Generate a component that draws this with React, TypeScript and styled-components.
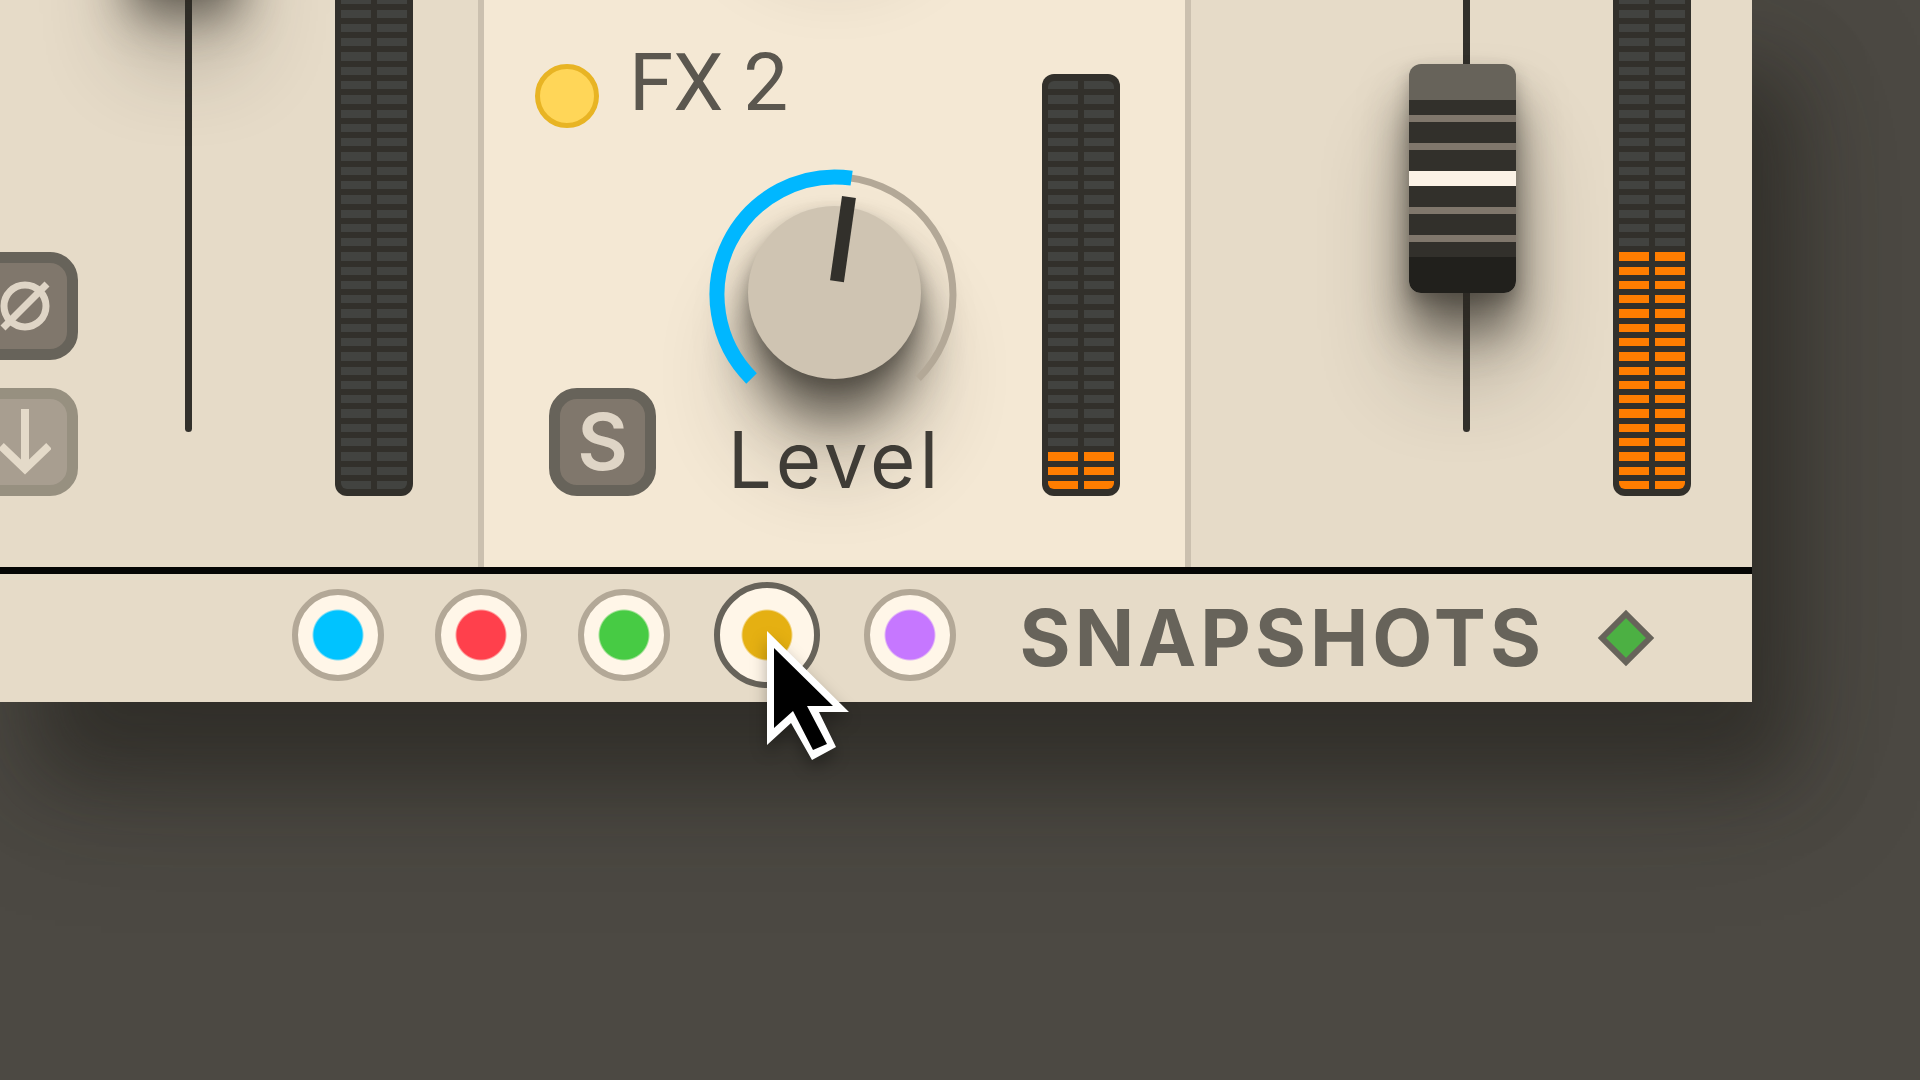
import React, { useState } from "react";
import styled, { createGlobalStyle, css } from "styled-components";

const color = {
  desk: "#4c4943",
  panel: "#e6dbc8",
  panelLight: "#f4e8d4",
  seam: "#cbc0af",
  rule: "#050504",
  ink: "#3f3c36",
  inkSoft: "#5b574f",
  iron: "#67635a",
  stone: "#80776c",
  sand: "#dfd5c6",
  ring: "#b3a897",
  cream: "#fff6e8",
  coal: "#32302b",
  cell: "#424340",
  lit: "#ff7d00",
  arc: "#00b7ff",
};

const GlobalStyle = createGlobalStyle`
  *, *::before, *::after { box-sizing: border-box; }
  body {
    margin: 0;
    min-height: 100vh;
    background: ${color.desk};
    font-family: Inter, "Liberation Sans", sans-serif;
    overflow-x: hidden;
  }
`;

const Desk = styled.main`
  min-height: 100vh;
  padding-right: 168px;
  overflow: hidden;
`;

const Mixer = styled.section`
  background: ${color.panel};
  box-shadow:
    40px 76px 72px rgba(34, 32, 28, 0.48),
    32px 72px 140px rgba(34, 32, 28, 0.3);
`;

const Console = styled.div`
  display: grid;
  grid-template-columns: minmax(0, 1fr) 707px 561px;
  grid-template-rows: 567px;
  overflow: hidden;
`;

const Channel = styled.section<{ $light?: boolean; $seam?: boolean }>`
  position: relative;
  display: flex;
  align-items: flex-end;
  justify-content: flex-end;
  min-width: 0;
  min-height: 0;
  padding: 0 ${(p) => (p.$seam ? 65 : 61)}px 71px 51px;
  background: ${(p) => (p.$light ? color.panelLight : color.panel)};
  border-right: ${(p) => (p.$seam ? `6px solid ${color.seam}` : "0")};
`;

const Meter = styled.div<{ $tall?: boolean }>`
  display: grid;
  grid-template-columns: 1fr 1fr;
  gap: 6px;
  flex: none;
  width: 78px;
  height: ${(p) => (p.$tall ? 522 : 422)}px;
  padding: 7px 6px;
  border-radius: 12px;
  background: ${color.coal};
`;

const MeterLane = styled.div`
  display: flex;
  flex-direction: column;
  gap: 6px;
  overflow: hidden;
  &:first-child { border-radius: 6px 0 0 6px; }
  &:last-child { border-radius: 0 6px 6px 0; }
`;

const MeterCell = styled.span<{ $lit: boolean }>`
  flex: 1;
  background: ${(p) => (p.$lit ? color.lit : color.cell)};
`;

const softShadow = css`
  box-shadow:
    0 8px 16px rgba(45, 42, 36, 0.3),
    0 36px 48px rgba(45, 42, 36, 0.65),
    0 80px 88px rgba(45, 42, 36, 0.3);
`;

const FaderSlot = styled.label`
  position: relative;
  display: flex;
  justify-content: center;
  align-items: flex-end;
  flex: none;
  width: 107px;
  height: 100%;
  margin-right: 97px;
  padding: 0 0 64px 7px;
`;

const FaderTrack = styled.span`
  width: 7px;
  height: 100%;
  background: ${color.coal};
  border-radius: 0 0 4px 4px;
`;

const FaderCap = styled.span`
  position: absolute;
  left: 0;
  width: 107px;
  height: 229px;
  border-radius: 12px;
  background: linear-gradient(
    ${color.iron} 36px,
    ${color.coal} 36px 51px,
    ${color.stone} 51px 58px,
    ${color.coal} 58px 79px,
    ${color.stone} 79px 86px,
    ${color.coal} 86px 107px,
    #fbf2e6 107px 122px,
    ${color.coal} 122px 143px,
    ${color.stone} 143px 150px,
    ${color.coal} 150px 171px,
    ${color.stone} 171px 178px,
    ${color.coal} 178px 193px,
    #21201c 193px
  );
  ${softShadow}
`;

const hiddenRange = css`
  position: absolute;
  inset: 0;
  width: 100%;
  height: 100%;
  margin: 0;
  opacity: 0;
  cursor: pointer;
`;

const VerticalRange = styled.input`
  ${hiddenRange}
  writing-mode: vertical-lr;
  direction: rtl;
`;

const KnobRange = styled.input`
  ${hiddenRange}
`;

const Buttons = styled.div`
  display: flex;
  flex-direction: column;
  flex: none;
  gap: 28px;
  margin-right: 53px;
`;

const SquareButton = styled.button<{ $dim?: boolean }>`
  display: grid;
  place-items: center;
  flex: none;
  width: 107px;
  height: 108px;
  padding: 0;
  border: 11px solid ${color.iron};
  border-radius: 28px;
  background: ${color.stone};
  color: ${color.sand};
  font: 600 78px/72px Inter, "Liberation Sans", sans-serif;
  ${(p) =>
    p.$dim &&
    css`
      border-color: #979080;
      background: #a89e90;
      color: #e4dac9;
    `}
  svg { display: block; }
`;

const FxStrip = styled.div`
  display: flex;
  flex-direction: column;
  justify-content: space-between;
  flex: 1;
  height: 100%;
  padding-top: 47px;
`;

const KnobAbove = styled.span`
  position: absolute;
  top: -299px;
  left: 264px;
  width: 173px;
  height: 173px;
  border-radius: 50%;
  ${softShadow}
`;

const FxHeader = styled.div`
  display: flex;
  align-items: flex-start;
  gap: 30px;
`;

const Lamp = styled.button`
  width: 64px;
  height: 64px;
  margin: 17px 0 0;
  padding: 0;
  border: 5px solid #e8b424;
  border-radius: 50%;
  background: #ffd658;
`;

const FxName = styled.h2`
  margin: 0;
  color: ${color.inkSoft};
  font-family: Roboto, "Liberation Sans", sans-serif;
  font-size: 80px;
  line-height: 72px;
  font-weight: 400;
`;

const FxBody = styled.div`
  display: flex;
  align-items: flex-end;
  gap: 49px;
  padding-left: 14px;
`;

const KnobField = styled.label`
  display: flex;
  flex-direction: column;
  align-items: center;
  width: 260px;
`;

const KnobDial = styled.span`
  position: relative;
  display: block;
  width: 260px;
  height: 260px;
`;

const KnobFace = styled.span`
  position: absolute;
  top: 42px;
  left: 43px;
  width: 173px;
  height: 173px;
  border-radius: 50%;
  background: #cfc4b2;
  ${softShadow}
`;

const KnobArt = styled.svg`
  position: absolute;
  inset: 0;
`;

const KnobLabel = styled.span`
  position: relative;
  color: ${color.ink};
  font-size: 78px;
  line-height: 72px;
  font-weight: 400;
  letter-spacing: 4px;
`;

const Footer = styled.footer`
  display: flex;
  align-items: center;
  justify-content: flex-end;
  height: 135px;
  padding-right: 97px;
  border-top: 7px solid ${color.rule};
`;

const Snapshots = styled.div`
  display: flex;
  gap: 36px;
  margin-right: 56px;
  padding-bottom: 7px;
`;

const SnapshotSlot = styled.label`
  position: relative;
  display: grid;
  place-items: center;
  width: 107px;
  height: 107px;
`;

const SnapshotRadio = styled.input<{ $tint: string }>`
  appearance: none;
  width: 92px;
  height: 92px;
  margin: 0;
  border: 6px solid ${color.ring};
  border-radius: 50%;
  background: radial-gradient(circle, ${(p) => p.$tint} 24px, ${color.cream} 26px);
  &:checked {
    width: 106px;
    height: 106px;
    border-color: ${color.iron};
  }
`;

const FooterTitle = styled.h2`
  margin: 0;
  color: ${color.iron};
  font-size: 78px;
  line-height: 72px;
  font-weight: 700;
  letter-spacing: 4px;
`;

const Diamond = styled.svg`
  margin-left: 52px;
`;

const Pointer = styled.svg`
  position: absolute;
  top: 50px;
  left: 53px;
  z-index: 1;
  overflow: visible;
  filter: drop-shadow(0 8px 8px rgba(0, 0, 0, 0.3));
  pointer-events: none;
`;

function LevelMeter({ rows, lit, tall, name }: { rows: number; lit: number; tall?: boolean; name: string }) {
  const cells = Array.from({ length: rows }, (_, i) => i >= rows - lit);
  return (
    <Meter $tall={tall} role="meter" aria-label={name} aria-valuemin={0} aria-valuemax={rows} aria-valuenow={lit}>
      {[0, 1].map((lane) => (
        <MeterLane key={lane}>
          {cells.map((on, i) => (
            <MeterCell key={i} $lit={on} />
          ))}
        </MeterLane>
      ))}
    </Meter>
  );
}

function Fader({ name, capTop }: { name: string; capTop: number }) {
  return (
    <FaderSlot>
      <FaderTrack />
      <FaderCap style={{ top: capTop }} />
      <VerticalRange type="range" aria-label={name} />
    </FaderSlot>
  );
}

const ARC_RADIUS = 118;
const arcPoint = (deg: number) => {
  const a = (deg * Math.PI) / 180;
  return `${130 + ARC_RADIUS * Math.sin(a)} ${131 - ARC_RADIUS * Math.cos(a)}`;
};
const arc = (from: number, to: number) =>
  `M${arcPoint(from)}A${ARC_RADIUS} ${ARC_RADIUS} 0 ${to - from > 180 ? 1 : 0} 1 ${arcPoint(to)}`;

function Knob({ label }: { label: string }) {
  const [value, setValue] = useState(53);
  const angle = -135 + value * 2.7;
  return (
    <KnobField>
      <KnobDial>
        <KnobFace />
        <KnobArt viewBox="0 0 260 260" width="260" height="260" fill="none">
          <path d={arc(-135, 135)} stroke={color.ring} strokeWidth="7" />
          <path d={arc(-135, angle)} stroke={color.arc} strokeWidth="15" />
          <path d="M130 32V117" stroke={color.coal} strokeWidth="14" transform={`rotate(${angle} 130 131)`} />
        </KnobArt>
        <KnobRange type="range" value={value} onChange={(e) => setValue(Number(e.target.value))} />
      </KnobDial>
      <KnobLabel>{label}</KnobLabel>
    </KnobField>
  );
}

const snapshots = [
  { name: "Blue", tint: "#00c3ff" },
  { name: "Red", tint: "#ff404c" },
  { name: "Green", tint: "#47cb44" },
  { name: "Yellow", tint: "#e5b012" },
  { name: "Purple", tint: "#c677ff" },
];

export default function App() {
  const [active, setActive] = useState("Yellow");
  return (
    <>
      <GlobalStyle />
      <Desk>
        <Mixer>
          <Console>
            <Channel $seam>
              <Buttons>
                <SquareButton aria-label="Invert phase">
                  <svg width="50" height="50" viewBox="0 0 50 50" fill="none" stroke="currentColor" strokeWidth="7">
                    <circle cx="25" cy="25" r="21" />
                    <path d="M3 47L47 3" />
                  </svg>
                </SquareButton>
                <SquareButton $dim aria-label="Send down">
                  <svg width="52" height="66" viewBox="0 0 52 66" fill="none" stroke="currentColor" strokeWidth="8">
                    <path d="M26 0V60M2 37L26 60L50 37" />
                  </svg>
                </SquareButton>
              </Buttons>
              <Fader name="Channel fader" capTop={-252} />
              <LevelMeter rows={36} lit={0} tall name="Channel level" />
            </Channel>

            <Channel $light $seam>
              <KnobAbove />
              <FxStrip>
                <FxHeader>
                  <Lamp aria-label="FX 2 on" />
                  <FxName>FX 2</FxName>
                </FxHeader>
                <FxBody>
                  <SquareButton>S</SquareButton>
                  <Knob label="Level" />
                </FxBody>
              </FxStrip>
              <LevelMeter rows={29} lit={3} name="FX 2 level" />
            </Channel>

            <Channel>
              <Fader name="Master fader" capTop={64} />
              <LevelMeter rows={36} lit={17} tall name="Master level" />
            </Channel>
          </Console>

          <Footer>
            <Snapshots role="radiogroup" aria-label="Snapshots">
              {snapshots.map((s) => (
                <SnapshotSlot key={s.name}>
                  <SnapshotRadio
                    type="radio"
                    name="snapshot"
                    aria-label={s.name}
                    $tint={s.tint}
                    checked={active === s.name}
                    onChange={() => setActive(s.name)}
                  />
                  {active === s.name && (
                    <Pointer width="82" height="130" viewBox="0 0 82 130">
                      <path d="M0 0L82 81H52L69 116L45 129L24 92L0 114Z" fill="#fff" />
                      <path d="M7 17L66 75H40L60 113L46 119L26 80L7 97Z" fill="#000" />
                    </Pointer>
                  )}
                </SnapshotSlot>
              ))}
            </Snapshots>
            <FooterTitle>SNAPSHOTS</FooterTitle>
            <Diamond width="58" height="58" viewBox="0 0 58 58">
              <path d="M29 5L53 29L29 53L5 29Z" fill="#4cb043" stroke={color.iron} strokeWidth="6" />
            </Diamond>
          </Footer>
        </Mixer>
      </Desk>
    </>
  );
}
